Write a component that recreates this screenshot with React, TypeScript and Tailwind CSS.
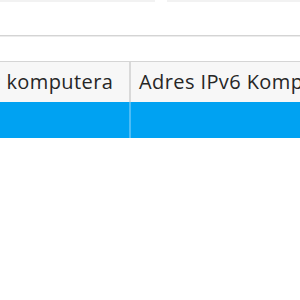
import React from 'react'

const columns = [
  { label: 'Adres IP komputera', width: 'w-[218px]' },
  { label: 'Adres IPv6 Komputera', width: 'w-[260px]' },
]

const App = () => {
  return (
    <div
      className="w-[300px] h-[300px] overflow-hidden bg-white text-[#262626]"
      style={{ fontFamily: '"Open Sans", "Noto Sans", sans-serif' }}
    >
      <div className="flex h-[2px] gap-[12px]">
        <div className="w-[155px] bg-[#f2f2f2]" />
        <div className="flex-1 bg-[#f2f2f2]" />
      </div>
      <div className="h-[33px]" />
      <div className="h-[1px] bg-[#d4d4d4]" />
      <div className="h-[1px] bg-[#ececec]" />
      <div className="h-[24px]" />
      <div className="-ml-[87px] w-[560px]">
        <div className="flex h-[41px] border-t border-[#d5d5d5] bg-[#f7f7f7]">
          {columns.map((col) => (
            <div
              key={col.label}
              className={`${col.width} shrink-0 flex items-center border-r-2 border-[#d9d9d9] pl-[8px] text-[20px] tracking-[0.4px] whitespace-nowrap`}
            >
              {col.label}
            </div>
          ))}
        </div>
        <div className="flex h-[36px] bg-[#00a2f2]">
          {columns.map((col) => (
            <div
              key={col.label}
              className={`${col.width} shrink-0 border-r-2 border-[#4dbcf5]`}
            />
          ))}
        </div>
      </div>
    </div>
  )
}

export default App
